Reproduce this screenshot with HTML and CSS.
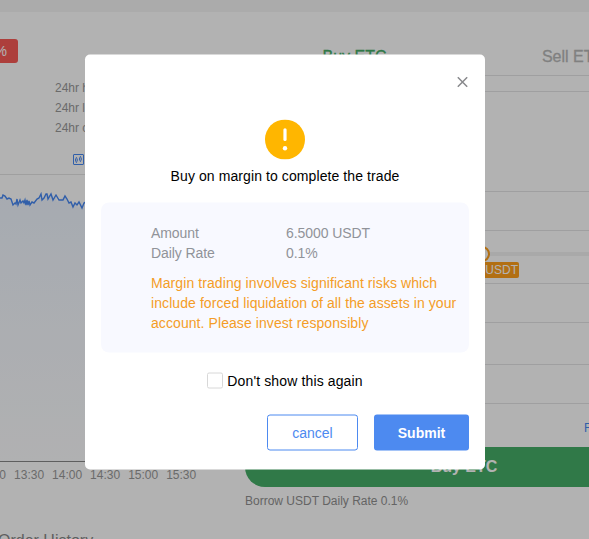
FILE: index.html
```html
<!DOCTYPE html>
<html lang="en">
<head>
    <meta charset="UTF-8">
    <meta name="viewport" content="width=device-width, initial-scale=1.0">
    <title>Margin Trading</title>
    <link rel="stylesheet" href="styles.css">
</head>
<body>
    <div class="top-strip"></div>
    <div class="trade-page">
        <div class="market">
            <div class="change-badge">%</div>
            <ul class="stats">
                <li>24hr high</li>
                <li>24hr low</li>
                <li>24hr change</li>
            </ul>
            <div class="chart-tools">
                <svg width="11" height="11" viewBox="0 0 11 11" fill="none" stroke="#4788f3">
                    <rect x="0.5" y="0.5" width="10" height="10" rx="0.5"/>
                    <ellipse cx="3.4" cy="6" rx="0.9" ry="2"/>
                    <ellipse cx="7.4" cy="5" rx="0.9" ry="2"/>
                    <path d="M3.4 3v1M3.4 8v1M7.4 2v1M7.4 7v1" stroke-width="0.7"/>
                </svg>
            </div>
            <svg class="chart" width="225" height="286" viewBox="0 0 225 286">
                <defs>
                    <linearGradient id="fade" x1="0" y1="0" x2="0" y2="1">
                        <stop offset="0" stop-color="#4788f3" stop-opacity="0.09"/>
                        <stop offset="1" stop-color="#4788f3" stop-opacity="0.01"/>
                    </linearGradient>
                </defs>
                <path d="M0 24L2 23L3 20L5 22L7 25L9 23L11 26L13 30L14 31L16 29L17 24L18 31L20 26L21 29L23 26L25 30L26 25L28 31L29 26L31 31L33 29L35 28L37 24L39 24L41 19L42 26L44 23L46 20L51 20L53 24L55 21L57 27L59 25L65 21L69 28L71 27L73 30L75 28L77 30L79 33L81 26L83 33L85 28L225 28V286H0Z" fill="url(#fade)"/>
                <path class="chart-line" d="M0 23L2 23L3 20L5 21L7 24L9 23L11 24L13 30L15 28L16 29L17 24L18 30L20 25L21 28L23 26L24 28L25 25L26 30L27 25L28 30L29 26L30 30L32 27L34 28L37 24L39 23L41 19L42 25L44 23L46 19L47 19L48 24L51 19L53 25L56 20L59 25L63 25L65 21L67 24L69 28L71 27L73 32L75 28L77 30L79 27L82 33L84 28L86 27"/>
            </svg>
            <div class="times">
                <span>13:00</span><span>13:30</span><span>14:00</span><span>14:30</span><span>15:00</span><span>15:30</span>
            </div>
            <h2 class="history-title">Order History</h2>
        </div>

        <div class="order-form">
            <div class="tabs">
                <span class="tab active">Buy ETC</span>
                <span class="tab">Sell ETC</span>
            </div>
            <div class="line gap-small"></div>
            <div class="line gap-large"></div>
            <div class="line gap-field"></div>
            <div class="line"></div>
            <div class="slider">
                <div class="track">
                    <span class="handle"></span>
                    <span class="slider-tag">6.5000 USDT</span>
                </div>
            </div>
            <div class="line gap-field"></div>
            <div class="line gap-row"></div>
            <div class="line gap-field"></div>
            <div class="line"></div>
            <a class="fee-link">Fee rate</a>
            <button class="buy-button" type="button">Buy ETC</button>
            <p class="borrow">Borrow USDT Daily Rate 0.1%</p>
        </div>
    </div>

    <div class="overlay"></div>
    <div class="modal">
        <div class="modal-close">
            <svg width="11" height="11" viewBox="0 0 11 11" fill="none" stroke="#88898c" stroke-width="1.5">
                <path d="M0.8 0.8L10.2 10.2M10.2 0.8L0.8 10.2"/>
            </svg>
        </div>
        <svg class="warning-icon" width="40" height="40" viewBox="0 0 40 40">
            <circle cx="20" cy="20" r="20" fill="#ffb600"/>
            <path d="M20 10.3V20" stroke="#fff" stroke-width="3.2" stroke-linecap="round"/>
            <circle cx="20" cy="28.8" r="2.2" fill="#fff"/>
        </svg>
        <p class="modal-title">Buy on margin to complete the trade</p>
        <div class="info-box">
            <div class="info-row"><span>Amount</span><span>6.5000 USDT</span></div>
            <div class="info-row"><span>Daily Rate</span><span>0.1%</span></div>
            <p class="risk">Margin trading involves significant risks which include forced liquidation of all the assets in your account. Please invest responsibly</p>
        </div>
        <label class="dont-show">
            <input type="checkbox">
            <span>Don't show this again</span>
        </label>
        <div class="modal-footer">
            <button class="cancel" type="button">cancel</button>
            <button class="submit" type="button">Submit</button>
        </div>
    </div>
</body>
</html>
```
FILE: styles.css
```css
* {
    box-sizing: border-box;
}
body {
    margin: 0;
    height: 539px;
    overflow: hidden;
    background-color: #fff;
    font-family: "Liberation Sans", Arial, sans-serif;
    font-size: 14px;
    color: #000;
}
p,
ul,
h2 {
    margin: 0;
    padding: 0;
}
button {
    font-family: inherit;
    border: none;
    padding: 0;
}

/* page */
.top-strip {
    height: 12px;
    background-color: #f5f5f5;
}
.trade-page {
    display: flex;
    gap: 20px;
    height: 527px;
    overflow: hidden;
}
.market {
    flex: 0 0 225px;
    padding-top: 27px;
}
.change-badge {
    width: 18px;
    height: 24px;
    padding-right: 11px;
    border-radius: 0 3px 3px 0;
    background-color: #f85b57;
    color: #fff;
    line-height: 25px;
    display: flex;
    justify-content: flex-end;
}
.stats {
    list-style: none;
    padding: 15px 0 0 55px;
    font-size: 12px;
    line-height: 20px;
    color: #999;
}
.chart-tools {
    display: flex;
    height: 36px;
    padding: 16px 0 0 73px;
}
.chart {
    display: block;
    box-sizing: content-box;
    border-top: 1px solid #e4e4e4;
    border-bottom: 1px solid #888;
}
.chart-line {
    fill: none;
    stroke: #4788f3;
    stroke-width: 1.4;
}
.times {
    display: flex;
    gap: 8px;
    margin: 6px 0 0 -24px;
    font-size: 12px;
    line-height: 14px;
    color: #999;
}
.times span {
    flex: 0 0 30px;
}
.history-title {
    margin: 49px 0 0 -2px;
    font-size: 16px;
    font-weight: normal;
    line-height: 20px;
    color: #888;
}
.order-form {
    display: flex;
    flex: 0 0 438px;
    flex-direction: column;
}
.tabs {
    display: flex;
    height: 63px;
    padding-top: 35px;
    font-size: 16px;
    line-height: 20px;
    color: #b8b8b8;
    -webkit-text-stroke: 0.3px;
}
.tab {
    flex: 1;
    text-align: center;
}
.tab.active {
    color: #45ae67;
}
.line {
    height: 1px;
    background-color: #e4e4e6;
}
.gap-small {
    margin-bottom: 15px;
}
.gap-large {
    margin-bottom: 99px;
}
.gap-field {
    margin-bottom: 38px;
}
.gap-row {
    margin-bottom: 41px;
}
.slider {
    height: 52px;
    padding-top: 21px;
}
.track {
    position: relative;
    height: 4px;
    background-color: #f2f2f2;
}
.handle {
    position: absolute;
    left: 229px;
    top: -6px;
    width: 16px;
    height: 16px;
    border: 2px solid #ff9f1c;
    border-radius: 50%;
    background-color: #fff;
}
.slider-tag {
    position: absolute;
    right: 164px;
    top: 10px;
    padding: 0 1px;
    border-radius: 2px;
    background-color: #ff9f1c;
    color: #fff;
    font-size: 12px;
    line-height: 16px;
}
.fee-link {
    padding: 17px 0 12px 339px;
    font-size: 12px;
    line-height: 14px;
    color: #4788f3;
}
.buy-button {
    height: 40px;
    border-radius: 20px;
    background-color: #45ae67;
    color: #fff;
    font-size: 16px;
    font-weight: bold;
}
.borrow {
    margin-top: 7px;
    font-size: 12px;
    line-height: 14px;
    color: #909090;
}

/* dialog */
.overlay {
    position: fixed;
    inset: 0;
    background-color: rgba(0, 0, 0, 0.3);
}
.modal {
    position: fixed;
    left: 285px;
    top: 262px;
    transform: translate(-50%, -50%);
    display: flex;
    flex-direction: column;
    width: 400px;
    height: 415px;
    padding: 0 16px;
    border-radius: 5px;
    background-color: #fff;
}
.modal-close {
    display: flex;
    justify-content: flex-end;
    height: 64.5px;
    padding: 21.5px 1px 0 0;
}
.warning-icon {
    align-self: center;
}
.modal-title {
    margin: 6.5px 0 17px;
    line-height: 20px;
    letter-spacing: 0.09px;
    text-align: center;
}
.info-box {
    height: 150px;
    padding: 20px 10px 20px 50px;
    border-radius: 8px;
    background-color: #f8f9ff;
    line-height: 20px;
    color: #909399;
}
.info-row {
    display: grid;
    grid-template-columns: 135px 1fr;
    letter-spacing: -0.08px;
}
.risk {
    margin-top: 10px;
    letter-spacing: 0.08px;
    color: #f49d27;
}
.dont-show {
    display: flex;
    justify-content: center;
    gap: 4px;
    height: 16px;
    margin: 20px 0 26px;
    line-height: 17px;
    letter-spacing: 0.13px;
}
.dont-show input {
    appearance: none;
    width: 16px;
    height: 16px;
    margin: 0;
    border: 1px solid #d8d8d8;
    border-radius: 2px;
}
.modal-footer {
    display: flex;
    justify-content: flex-end;
    gap: 16px;
}
.modal-footer button {
    height: 36px;
    border-radius: 3px;
    font-size: 14px;
}
.modal-footer .cancel {
    width: 91px;
    border: 1px solid #4d8af0;
    background-color: #fff;
    color: #4d8af0;
}
.modal-footer .submit {
    width: 95px;
    background-color: #4d8af0;
    color: #fff;
    font-weight: bold;
}
```
